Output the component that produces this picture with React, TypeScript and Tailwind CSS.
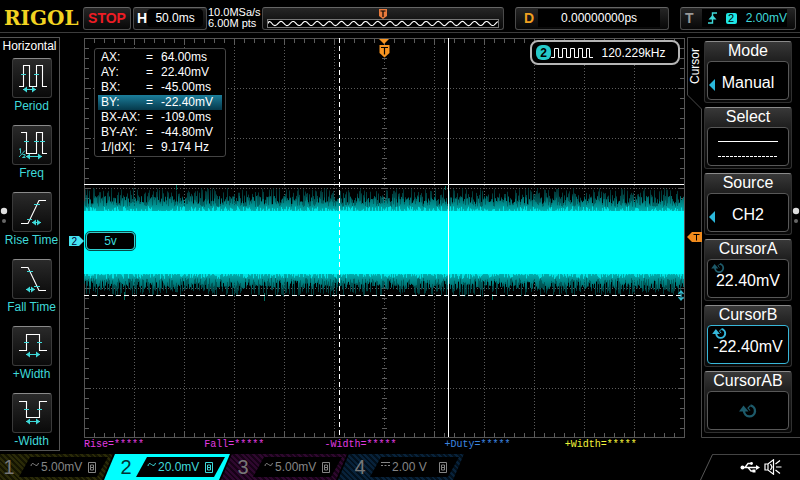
import type { ReactNode } from "react";

const CYAN = "#3fd9d9";

/* ---------- waveform and graticule data ---------- */

function makeRandom(seed: number) {
  let s = seed;
  return () => {
    s = (s * 1664525 + 1013904223) % 4294967296;
    return s / 4294967296;
  };
}

function noisePath(seed: number, base: number, min: number, range: number, dir: number, power: number) {
  const rnd = makeRandom(seed);
  let d = "";
  for (let x = 0; x < 600; x++) {
    const h = min + Math.pow(rnd(), power) * range;
    d += `M${x + 0.5} ${base}V${(base + dir * h).toFixed(1)}`;
  }
  return d;
}

const faintTop = noisePath(7, 174, 8, 16, -1, 1.2);
const faintBottom = noisePath(19, 235, 8, 16, 1, 1.2);
const midTop = noisePath(31, 174, 5, 11, -1, 1.2);
const midBottom = noisePath(43, 235, 5, 11, 1, 1.2);
const brightTop = noisePath(57, 174, 0, 6, -1, 2);
const brightBottom = noisePath(71, 235, 0, 6, 1, 2);

const ticks = (() => {
  let d = "";
  for (let x = 10; x < 600; x += 10) {
    const l = x % 50 === 0 ? 6 : 4;
    d += `M${x + 0.5} 1v${l}M${x + 0.5} 399v-${l}M${x + 0.5} 198v5`;
  }
  for (let y = 10; y < 400; y += 10) {
    const l = y % 50 === 0 ? 6 : 4;
    d += `M1 ${y + 0.5}h${l}M600 ${y + 0.5}h-${l}M298 ${y + 0.5}h5`;
  }
  return d;
})();

const gridLines = (() => {
  let d = "";
  for (let x = 50; x < 600; x += 50) d += `M${x + 0.5} 0V399`;
  for (let y = 50; y < 400; y += 50) d += `M0 ${y + 0.5}H600`;
  return d;
})();

const previewWave = (() => {
  let d = "M0 4";
  for (let x = 1; x <= 232; x++) d += `L${x} ${(4 + 2.4 * Math.sin(((x - 4) / 12.2) * Math.PI * 2)).toFixed(2)}`;
  return d;
})();

/* ---------- header ---------- */

const boxClass =
  "flex h-[23px] items-center rounded-[3px] border border-[#4a4a4a] border-t-[#666] bg-linear-to-b from-[#262626] to-[#080808]";

function Header() {
  return (
    <header className="flex h-[33px] items-center border-b border-[#3c3c3c] pt-1 pr-1">
      <h1 className="w-[83px] pl-1 font-['DejaVu_Serif',serif] text-[20px] leading-none font-bold text-[#f2d321]">
        RIGOL
      </h1>
      <button className={`${boxClass} w-12 justify-center text-[14px] font-bold text-[#ee1c24]`}>STOP</button>
      <button className={`${boxClass} ml-[2px] w-[74px] px-[3px]`}>
        <span className="text-[14px] font-bold">H</span>
        <span className="flex-1 rounded-sm bg-black text-center text-[12px]">50.0ms</span>
      </button>
      <div className="ml-[1px] w-[54px] pb-px text-[11px] leading-[11px] whitespace-nowrap">
        <p>10.0MSa/s</p>
        <p>6.00M pts</p>
      </div>
      <div className={`${boxClass} min-w-0 flex-1 flex-col px-1`}>
        <svg viewBox="0 0 8 10" className="mt-px h-[10px] w-2 shrink-0">
          <path d="M0 0h8v7L4 10L0 7Z" fill="#e87a3c" />
          <path d="M1.5 2h5M4 2v6" stroke="#000" strokeWidth="1.2" />
        </svg>
        <svg viewBox="0 0 232 8" preserveAspectRatio="none" className="h-[9px] w-full border border-[#777] bg-black">
          <path d={previewWave} fill="none" stroke="#fff" strokeWidth="1.2" />
        </svg>
      </div>
      <button className={`${boxClass} ml-[11px] w-[154px] px-2`}>
        <span className="text-[14px] font-bold text-[#f0a020]">D</span>
        <span className="ml-1 flex-1 bg-black text-center text-[12px]">0.00000000ps</span>
      </button>
      <button className={`${boxClass} ml-[11px] w-[116px] pr-2 pl-1`}>
        <span className="text-[14px] font-bold text-[#999]">T</span>
        <span className="ml-2 flex flex-1 items-center justify-end gap-[9px] bg-black text-[12px] text-[#3fd9d9]">
          <svg viewBox="0 0 9 12" className="h-3 w-[9px]" fill="none" stroke={CYAN} strokeWidth="1.4">
            <path d="M0 11H4.5V1H9" />
            <path d="M0.5 7.5L4.5 3L8.5 7.5Z" fill={CYAN} stroke="none" />
          </svg>
          <span className="flex h-[11px] w-[11px] items-center justify-center rounded-[2px] bg-[#1fe5e5] text-[11px] leading-none text-black">
            2
          </span>
          <span>2.00mV</span>
        </span>
      </button>
    </header>
  );
}

/* ---------- left menu ---------- */

type MeasureItem = { label: string; white: string; teal: string; arrow: [number, number, number]; fraction?: boolean };

const measures: MeasureItem[] = [
  { label: "Period", white: "M7 28.5H11.5V7.5H17.5V28.5H24.5V7.5H30.5V28.5H35", teal: "M9 16.5h5M22 16.5h5", arrow: [11, 24, 31.5] },
  { label: "Freq", white: "M9 7.5H14.5V28.5H24.5V7.5H30.5V28.5H35", teal: "M12 16.5h5M22 16.5h5M28 16.5h5", arrow: [14, 30, 31.5], fraction: true },
  { label: "Rise Time", white: "M9 31.5H16L27 8.5H34", teal: "M15 27.5h5M22 12.5h6", arrow: [20, 29, 30.5] },
  { label: "Fall Time", white: "M9 8.5H16L27 31.5H34", teal: "M15 12.5h6M22 27.5h6", arrow: [14, 23, 30.5] },
  { label: "+Width", white: "M7 24.5H14.5V8.5H27.5V24.5H35", teal: "M12 16.5h5M25 16.5h5", arrow: [14, 28, 28.5] },
  { label: "-Width", white: "M7 8.5H14.5V24.5H27.5V8.5H35", teal: "M12 16.5h5M25 16.5h5", arrow: [14, 28, 28.5] },
];

function MeasureMenu() {
  return (
    <nav className="w-[60px] border-t border-r border-b border-[#555]">
      <h2 className="h-[20px] text-center text-[12px] leading-4">Horizontal</h2>
      <ul className="flex flex-col gap-[11px] pl-1">
        {measures.map(({ label, white, teal, arrow: [a, b, y], fraction }) => (
          <li key={label}>
            <button className="flex w-full flex-col items-center text-[12px] leading-4 whitespace-nowrap text-[#3fd9d9]">
              <span className="h-10 w-10 rounded-[3px] border border-[#3a3a3a] border-t-[#8a8a8a] bg-linear-to-b from-[#2a2a2a] to-[#0a0a0a]">
                <svg viewBox="1 1 38 38" className="h-[38px] w-[38px]" fill="none">
                  <path d={white} stroke="#fff" strokeWidth="1.1" />
                  <path d={teal} stroke={CYAN} />
                  <path d={`M${a} ${y}H${b}`} stroke={CYAN} />
                  <path d={`M${a} ${y}l4 -3v6ZM${b} ${y}l-4 -3v6Z`} fill={CYAN} />
                  {fraction && <path d="M7 24.5l1.500 -1v5M7 32L13 25.500M10.500 29.500h2.500v1.500L10.500 32.500h3" stroke={CYAN} strokeWidth="0.9" />}
                </svg>
              </span>
              <span>{label}</span>
            </button>
          </li>
        ))}
      </ul>
    </nav>
  );
}

/* ---------- plot ---------- */

const cursorRows = [
  ["AX:", "64.00ms"],
  ["AY:", "22.40mV"],
  ["BX:", "-45.00ms"],
  ["BY:", "-22.40mV"],
  ["BX-AX:", "-109.0ms"],
  ["BY-AY:", "-44.80mV"],
  ["1/|dX|:", "9.174 Hz"],
];

const results = [
  { text: "Rise=*****", color: "text-[#e23be2]" },
  { text: "Fall=*****", color: "text-[#e23be2]" },
  { text: "-Width=*****", color: "text-[#e23be2]" },
  { text: "+Duty=*****", color: "text-[#3c86e0]" },
  { text: "+Width=*****", color: "text-[#f4f43a]" },
];

function Plot() {
  return (
    <main className="min-w-0 flex-1 pt-px pr-[2px] pl-6">
      <div className="relative">
        <svg viewBox="0 0 601 401" className="block w-full" fill="none">
          <defs>
            <linearGradient id="fadeTop" gradientUnits="userSpaceOnUse" x1="0" y1="150" x2="0" y2="174">
              <stop offset="0" stopColor="#003c3c" />
              <stop offset="1" stopColor="#00b4b4" />
            </linearGradient>
            <linearGradient id="fadeBottom" gradientUnits="userSpaceOnUse" x1="0" y1="259" x2="0" y2="235">
              <stop offset="0" stopColor="#003c3c" />
              <stop offset="1" stopColor="#00b4b4" />
            </linearGradient>
          </defs>
          <path d={gridLines} stroke="#5c5c5c" strokeDasharray="1 2" />
          <path d={ticks} stroke="#5c5c5c" />
          <rect x="0.5" y="0.5" width="600" height="399" stroke="#555" />
          <path d={faintTop} stroke="url(#fadeTop)" strokeOpacity="0.7" />
          <path d={faintBottom} stroke="url(#fadeBottom)" strokeOpacity="0.7" />
          <path d={midTop} stroke="url(#fadeTop)" />
          <path d={midBottom} stroke="url(#fadeBottom)" />
          <path d={brightTop + brightBottom} stroke="#00f0f0" strokeOpacity="0.8" />
          <rect y="173" width="600" height="63" fill="#00ffff" />
          <path d="M92.500 152V146M361.500 152V148M40.500 254V262M180.500 255V263M408.500 256V262" stroke="#006a5a" />
          <path d="M0 146.500H600M364.500 0V399" stroke="#fff" />
          <path d="M0 257.500H600" stroke="#fff" strokeDasharray="5 3" />
          <path d="M255.500 0V399" stroke="#fff" strokeDasharray="5 3" />
          <path d="M295 1h10l-5 5Z" fill="#f79421" />
          <path d="M295.500 7h10v8l-5 4.500l-5 -4.500Z" fill="#f79421" />
          <path d="M297 9.500h7M300.500 9.500v7" stroke="#000" strokeWidth="1.2" />
          <path d="M597 253v9M594.500 256l2.500 -3l2.500 3M594.500 259l2.500 3l2.500 -3" stroke="#35b8cc" strokeWidth="1.3" />
        </svg>

        <table className="absolute top-[10px] left-[10px] w-[132px] border-separate border-spacing-0 rounded-[3px] border border-[#444] bg-black px-[3px] py-px text-[12px] leading-[15px]">
          <tbody>
            {cursorRows.map(([name, value]) => {
              const on = name === "BY:";
              return (
                <tr key={name} className={on ? "bg-linear-to-b from-[#1c7f9c] to-[#06394b]" : ""}>
                  <th className="w-[48px] pl-[3px] text-left font-normal">{name}</th>
                  <td className="w-[15px]">=</td>
                  <td>{value}</td>
                </tr>
              );
            })}
          </tbody>
        </table>

        <div className="absolute top-[2px] right-[5px] flex h-[25px] w-[150px] items-center rounded-lg border-2 border-[#b5b5b5] bg-black pr-1 pl-1 text-[12px]">
          <span className="flex h-[15px] w-[15px] items-center justify-center rounded-md bg-[#25c9c9] font-bold text-black">
            2
          </span>
          <svg viewBox="0 0 42 12" className="h-3 w-[42px]" fill="none" stroke="#fff">
            <path d="M0 10.500H3.500V1.500H7.500V10.500H11.500V1.500H15.500V10.500H19.500V1.500H23.500V10.500H27.500V1.500H31.500V10.500H35.500V1.500H38.500V10.500H42" />
          </svg>
          <span className="flex-1 text-center">120.229kHz</span>
        </div>

        <div className="absolute top-[194px] left-[2px] flex h-[18px] w-[49px] items-center justify-center rounded-[4px] border border-[#2fd0d0] bg-black text-[12px] text-[#3fd9d9] outline outline-[#064a4a]">
          5v
        </div>
        <svg viewBox="0 0 15 10" className="absolute top-[198px] -left-[15px] h-[10px] w-[15px]">
          <path d="M0 0h10l5 5l-5 5H0Z" fill="#45e3f0" />
          <text x="2.500" y="8.500" fontSize="10" fontFamily="Liberation Sans" fill="#003">
            2
          </text>
        </svg>
        <svg viewBox="0 0 15 10" className="absolute top-[194px] -right-[17px] z-10 h-[10px] w-[15px]">
          <path d="M15 0H5L0 5l5 5h10Z" fill="#f08a1c" />
          <path d="M6.500 2.500h6M9.500 2.500v6" stroke="#000" />
        </svg>
      </div>
      <ul className="grid grid-cols-5 font-['Liberation_Mono',monospace] text-[10px] leading-[12px]">
        {results.map(({ text, color }) => (
          <li key={text} className={color}>
            {text}
          </li>
        ))}
      </ul>
    </main>
  );
}

/* ---------- right menu ---------- */

function Knob({ className, color }: { className: string; color: string }) {
  return (
    <svg viewBox="0 0 18 16" className={className} fill="none">
      <path d="M11.500 2.500A5.500 5.500 0 1 1 5 8" stroke={color} strokeWidth="2.400" />
      <path d="M0 8.500L4.500 2.500L9.500 8.500Z" fill={color} />
      <path d="M11.500 2.500L9 5L11 7.500" stroke={color} strokeWidth="1.200" />
    </svg>
  );
}

function SoftKey({ title, active, children }: { title: string; active?: boolean; children: ReactNode }) {
  return (
    <button className="flex h-[62px] w-[88px] flex-col rounded-[3px] border border-[#303030] border-t-[#8a8a8a] bg-linear-to-b from-[#383838] via-[#202020] via-30% to-[#080808] px-[2px] pb-[2px] text-[16px]">
      <span className="h-[19px] w-full text-center leading-[18px]">{title}</span>
      <span
        className={`relative flex w-full flex-1 items-center justify-center rounded-[4px] border bg-black pt-1 leading-[18px] ${active ? "border-[#38b6d8]" : "border-[#585858]"}`}
      >
        {children}
      </span>
    </button>
  );
}

function LeftArrow() {
  return (
    <svg viewBox="0 0 6 12" className="absolute top-[17px] left-[1px] h-3 w-[6px]">
      <path d="M6 0V12L0 6Z" fill="#2bb8dc" />
    </svg>
  );
}

function CursorMenu() {
  return (
    <aside className="relative flex w-[113px]">
      <div className="relative h-[401px] w-[17px]">
        <svg viewBox="0 0 17 401" className="h-full w-full" fill="none">
          <path d="M17 0.500H0.500V58L14.500 72V400.500H17" stroke="#484848" />
        </svg>
        <span className="absolute top-[11px] left-[1px] rotate-180 text-[12px] leading-[14px] [writing-mode:vertical-rl]">
          Cursor
        </span>
      </div>
      <div className="flex h-[401px] flex-1 flex-col gap-1 border-t border-b border-[#484848] pt-[3px]">
        <SoftKey title="Mode">
          <LeftArrow />
          Manual
        </SoftKey>
        <SoftKey title="Select">
          <svg viewBox="0 0 60 18" className="mb-[2px] h-[18px] w-[60px]">
            <path d="M0 2.500H60" stroke="#fff" />
            <path d="M0 17.500H60" stroke="#fff" strokeDasharray="3 1" />
          </svg>
        </SoftKey>
        <SoftKey title="Source">
          <LeftArrow />
          CH2
        </SoftKey>
        <SoftKey title="CursorA">
          <Knob className="absolute top-[2px] left-[3px] h-3 w-[14px]" color="#1d5a6a" />
          22.40mV
        </SoftKey>
        <SoftKey title="CursorB" active>
          <Knob className="absolute top-[1px] left-[4px] h-[13px] w-[15px]" color="#35b8dc" />
          -22.40mV
        </SoftKey>
        <SoftKey title="CursorAB">
          <Knob className="mb-1 h-4 w-[18px]" color="#1d5a6a" />
        </SoftKey>
      </div>
      <PageDots className="right-0" />
    </aside>
  );
}

function PageDots({ className }: { className: string }) {
  return (
    <svg viewBox="0 0 8 18" className={`absolute top-[170px] h-[18px] w-2 ${className}`}>
      <circle cx="4" cy="4" r="3.200" fill="#ddd" />
      <circle cx="4" cy="14" r="2" fill="#666" />
    </svg>
  );
}

/* ---------- channel bar ---------- */

const slant = "[clip-path:polygon(11px_0,100%_0,calc(100%-11px)_100%,0_100%)]";

const channels = [
  { id: 1, scale: "5.00mV", stripes: "bg-[repeating-linear-gradient(45deg,#2a2a08_0_2px,#141402_2px_4px)]" },
  { id: 2, scale: "20.0mV", stripes: "bg-[#00ffff]" },
  { id: 3, scale: "5.00mV", stripes: "bg-[repeating-linear-gradient(45deg,#2e082e_0_2px,#160216_2px_4px)]" },
  { id: 4, scale: "2.00 V", stripes: "bg-[repeating-linear-gradient(45deg,#08223a_0_2px,#02101c_2px_4px)]" },
];

function ChannelBar() {
  return (
    <footer className="mt-[3px] flex h-[26px] overflow-hidden">
      <div className="-ml-[13px] flex">
        {channels.map(({ id, scale, stripes }) => {
          const on = id === 2;
          return (
            <button key={id} className={`-mr-[9px] flex w-[126px] items-center pr-[5px] ${slant} ${stripes}`}>
              <span className={`w-8 pl-3 text-center text-[20px] leading-none ${on ? "text-[#033]" : "text-[#777]"}`}>
                {id}
              </span>
              <span
                className={`flex h-5 flex-1 items-center bg-black pl-[11px] text-[12px] whitespace-nowrap ${slant} ${on ? "text-[#3fd9d9]" : "text-[#858585]"}`}
              >
                <svg viewBox="0 0 9 8" className="mr-[2px] mb-1 h-2 w-[9px]" fill="none" stroke="currentColor">
                  {id === 4 ? <path d="M0 1.500H9M0 4.500h2m1.500 0h2m1.500 0h2" /> : <path d="M1 5Q1.500 1 4.500 3.500T8.500 2" />}
                </svg>
                <span className="w-[47px] text-left">{scale}</span>
                <svg viewBox="0 0 8 11" className="h-[11px] w-2" fill="none" stroke="currentColor">
                  <path d="M0.500 0.500H7.500V10.500H0.500ZM2.500 3H5.500V5.500H2.500ZM2.500 5.500H5.500V8H2.500Z" />
                </svg>
              </span>
            </button>
          );
        })}
      </div>
      <div className="ml-auto flex w-[100px]">
        <svg viewBox="0 0 13 26" className="h-[26px] w-[13px]" fill="none">
          <path d="M0.500 26L12.500 0.500H13" stroke="#555" />
        </svg>
        <div className="flex flex-1 items-center gap-1 border-t border-[#444] pb-[2px] pl-[27px]">
          <svg viewBox="0 0 20 12" className="h-3 w-5" fill="none" stroke="#fff" strokeWidth="1.300">
            <path d="M2 6.500H17M5 6.500L8 2.500H11M8 6.500L11 10H14" />
            <circle cx="2.500" cy="6.500" r="2" fill="#fff" stroke="none" />
            <path d="M16 4L20 6.500L16 9Z" fill="#fff" stroke="none" />
            <circle cx="11.500" cy="2.500" r="1.400" fill="#fff" stroke="none" />
            <path d="M12.500 8.500h3v3h-3Z" fill="#fff" stroke="none" />
          </svg>
          <svg viewBox="0 0 18 16" className="h-4 w-[18px]" fill="none" stroke="#fff" strokeWidth="1.200">
            <path d="M1 5H4L9.500 0.800V15.200L4 11H1ZM4 5V11M6.500 5L8 8L6.500 11" />
            <path d="M11.500 5L16 1.500M12 8H17.500M11.500 11L16 14.500" />
          </svg>
        </div>
      </div>
    </footer>
  );
}

export default function App() {
  return (
    <div className="flex min-h-screen flex-col bg-black font-['Liberation_Sans',Arial,sans-serif] text-white">
      <Header />
      <div className="relative mt-1 flex">
        <MeasureMenu />
        <PageDots className="left-0" />
        <Plot />
        <CursorMenu />
      </div>
      <ChannelBar />
    </div>
  );
}
